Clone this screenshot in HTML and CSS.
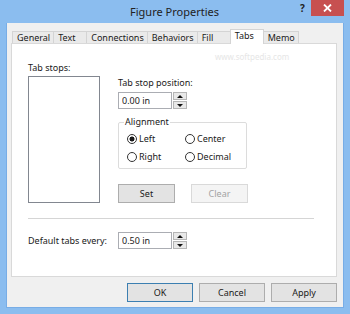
FILE: index.html
```html
<!DOCTYPE html>
<html>
<head>
  <meta charset="UTF-8">
  <title>Figure Properties</title>
  <link rel="stylesheet" href="styles.css">
</head>
<body>
  <div class="window">
    <div class="titlebar">
      <span class="title">Figure Properties</span>
      <span class="help">?</span>
      <span class="close">
        <svg width="9" height="8" viewBox="0 0 9 8"><path d="M1 0.5 L8 7.5 M8 0.5 L1 7.5" stroke="#fff" stroke-width="1.8"/></svg>
      </span>
    </div>

    <div class="client">
      <div class="tabs">
        <div class="tab">General</div>
        <div class="tab">Text</div>
        <div class="tab">Connections</div>
        <div class="tab">Behaviors</div>
        <div class="tab">Fill</div>
        <div class="tab active">Tabs</div>
        <div class="tab">Memo</div>
      </div>

      <div class="panel">
        <span class="watermark">www.softpedia.com</span>
        <div class="top">
          <div class="col-left">
            <div class="label">Tab stops:</div>
            <div class="listbox"></div>
          </div>
          <div class="col-right">
            <div class="label">Tab stop position:</div>
            <div class="spin">
              <input class="field" type="text" value="0.00 in">
              <div class="spin-btns">
                <span class="spin-up"></span>
                <span class="spin-down"></span>
              </div>
            </div>
            <fieldset class="group">
              <legend>Alignment</legend>
              <label class="radio"><input type="radio" name="align" checked>Left</label>
              <label class="radio"><input type="radio" name="align">Center</label>
              <label class="radio"><input type="radio" name="align">Right</label>
              <label class="radio"><input type="radio" name="align">Decimal</label>
            </fieldset>
            <div class="actions">
              <button class="btn">Set</button>
              <button class="btn" disabled>Clear</button>
            </div>
          </div>
        </div>

        <div class="sep"></div>

        <div class="default-row">
          <span class="label">Default tabs every:</span>
          <div class="spin">
            <input class="field" type="text" value="0.50 in">
            <div class="spin-btns">
              <span class="spin-up"></span>
              <span class="spin-down"></span>
            </div>
          </div>
        </div>
      </div>

      <div class="buttons">
        <button class="btn default">OK</button>
        <button class="btn">Cancel</button>
        <button class="btn">Apply</button>
      </div>
    </div>
  </div>
</body>
</html>
```

FILE: styles.css
```css
body {
  margin: 0;
  font-family: "Noto Sans", sans-serif;
  font-size: 9px;
  color: #1a1a1a;
}
.window {
  width: 350px;
  height: 314px;
  box-sizing: border-box;
  padding: 0 6px 6px 6px;
  background-color: #8bbdef;
  display: flex;
  flex-direction: column;
}
.titlebar {
  height: 23px;
  display: flex;
  align-items: flex-start;
}
.title {
  flex: 1;
  margin-left: 48px;
  text-align: center;
  font-size: 11px;
  line-height: 23px;
  color: #222;
}
.help {
  width: 15px;
  text-align: center;
  font-size: 10px;
  font-weight: bold;
  line-height: 16px;
  color: #222;
  margin-right: 1px;
}
.close {
  width: 33px;
  height: 16px;
  background-color: #c75050;
  display: flex;
  align-items: center;
  justify-content: center;
}
.close svg {
  display: block;
}
.client {
  flex: 1;
  background-color: #f0f0f0;
  border: 1px solid #78ade6;
  border-top: none;
  padding: 6px 6px 0 4px;
  display: flex;
  flex-direction: column;
}

/* tab strip */
.tabs {
  height: 14px;
  display: flex;
  align-items: flex-end;
  padding-left: 1px;
}
.tab {
  height: 12px;
  min-width: 34px;
  box-sizing: border-box;
  padding: 0 3px 0 4px;
  line-height: 11px;
  background-color: #eaeaea;
  border: 1px solid #d4d4d4;
  border-bottom: none;
  margin-right: -1px;
}
.tab.active {
  height: 15px;
  margin-bottom: -1px;
  background-color: #fff;
  position: relative;
  z-index: 1;
  line-height: 12px;
}

/* page */
.panel {
  height: 234px;
  box-sizing: border-box;
  background-color: #fff;
  border: 1px solid #d9d9d9;
  padding-left: 16px;
  position: relative;
}
.watermark {
  position: absolute;
  left: 203px;
  top: 7px;
  font-size: 8px;
  color: #e6e6e6;
}
.top {
  display: flex;
  gap: 18px;
}
.label {
  line-height: 14px;
}
.col-left {
  padding-top: 17px;
}
.listbox {
  margin-top: 1px;
  width: 72px;
  height: 127px;
  box-sizing: border-box;
  border: 1px solid #828790;
}
.col-right {
  padding-top: 32px;
}
.spin {
  display: flex;
  gap: 1px;
  margin-top: 2px;
}
.field {
  width: 54px;
  height: 17px;
  box-sizing: border-box;
  border: 1px solid #abadb3;
  padding: 0 3px;
  font-family: inherit;
  font-size: 9px;
  color: #1a1a1a;
  outline: none;
}
.spin-btns {
  display: flex;
  flex-direction: column;
  gap: 1px;
}
.spin-btns span {
  width: 14px;
  height: 8px;
  box-sizing: border-box;
  border: 1px solid #b5b5b5;
  background-color: #e8e8e8;
  display: flex;
  align-items: center;
  justify-content: center;
}
.spin-up::after {
  content: "";
  border-left: 3px solid transparent;
  border-right: 3px solid transparent;
  border-bottom: 3px solid #111;
}
.spin-down::after {
  content: "";
  border-left: 3px solid transparent;
  border-right: 3px solid transparent;
  border-top: 3px solid #111;
}
.group {
  width: 129px;
  box-sizing: border-box;
  margin: 7px 0 0 0;
  padding: 4px 4px 4px 8px;
  border: 1px solid #dcdcdc;
  border-radius: 2px;
  display: grid;
  grid-template-columns: 58px auto;
  row-gap: 4px;
}
.group legend {
  padding: 0 1px;
  margin-left: -3px;
  line-height: 12px;
}
.radio {
  display: flex;
  align-items: center;
  gap: 2px;
  line-height: 14px;
}
.radio input {
  appearance: none;
  margin: 0;
  width: 10px;
  height: 10px;
  box-sizing: border-box;
  border: 1px solid #333;
  border-radius: 50%;
  background-color: #fff;
}
.radio input:checked {
  background: radial-gradient(circle, #1a1a1a 0 2.2px, #fff 2.8px);
}
.actions {
  display: flex;
  gap: 16px;
  margin-top: 15px;
}
.btn {
  width: 57px;
  height: 19px;
  box-sizing: border-box;
  padding: 0;
  font-family: inherit;
  font-size: 9px;
  color: #1a1a1a;
  background-color: #e3e3e3;
  border: 1px solid #adadad;
}
.btn:disabled {
  color: #a3a3a3;
  background-color: #f4f4f4;
  border-color: #d9d9d9;
}
.sep {
  height: 1px;
  background-color: #d5d5d5;
  margin: 15px 22px 0 0;
}
.default-row {
  display: flex;
  align-items: center;
  margin-top: 13px;
}
.default-row .label {
  width: 90px;
}
.default-row .spin {
  margin-top: 0;
}
.buttons {
  display: flex;
  justify-content: flex-end;
  gap: 6px;
  margin-top: 6px;
}
.buttons .btn {
  width: 66px;
}
.btn.default {
  border-color: #3c7fb1;
}
```
